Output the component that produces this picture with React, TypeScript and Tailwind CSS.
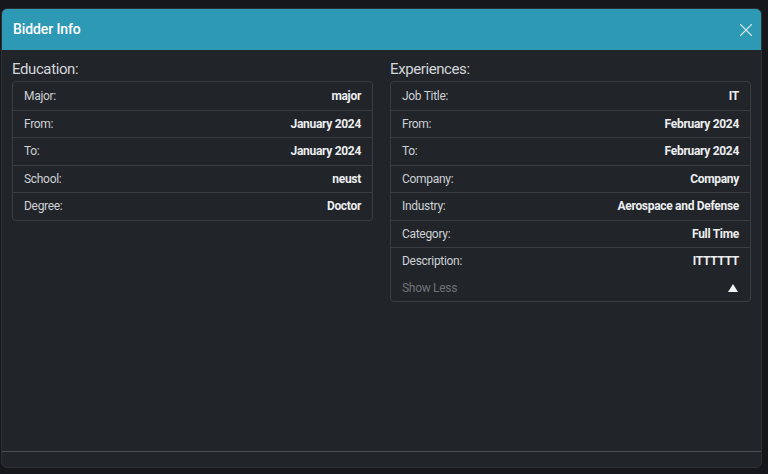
import { X } from "lucide-react";

const education = [
  ["Major:", "major"],
  ["From:", "January 2024"],
  ["To:", "January 2024"],
  ["School:", "neust"],
  ["Degree:", "Doctor"],
];

const experiences = [
  ["Job Title:", "IT"],
  ["From:", "February 2024"],
  ["To:", "February 2024"],
  ["Company:", "Company"],
  ["Industry:", "Aerospace and Defense"],
  ["Category:", "Full Time"],
];

function Row({ label, value, first }: { label: string; value: string; first?: boolean }) {
  return (
    <div
      className={
        "flex h-[27.5px] items-center justify-between px-[11px] text-[12px] tracking-[-0.3px] " +
        (first ? "" : "border-t border-[#3a3d42]")
      }
    >
      <span className="text-[#cdd1d5]">{label}</span>
      <span className="font-bold text-[#eceef0]">{value}</span>
    </div>
  );
}

export default function App() {
  return (
    <div
      className="h-[474px] w-[768px] overflow-hidden bg-[#15171a] pt-[8px] pl-[1px]"
      style={{ fontFamily: "Roboto, 'Noto Sans', sans-serif" }}
    >
      <div className="flex h-[460px] w-[761px] flex-col overflow-hidden rounded-[6px] border border-[#2c2f33] bg-[#212429]">
        {/* header */}
        <div className="flex h-[41px] shrink-0 items-center justify-between bg-[#2e99b5] pl-[11px] pr-[4px]">
          <span className="text-[14px] font-medium tracking-[-0.1px] text-white">Bidder Info</span>
          <X className="h-[22px] w-[22px] text-[#cfe9f1]" strokeWidth={1.2} />
        </div>

        {/* body */}
        <div className="grid flex-1 grid-cols-2 gap-[17px] px-[10px] pt-[9px]">
          <div>
            <div className="mb-[2px] text-[15px] leading-[20px] tracking-[-0.4px] text-[#d3d6d9]">Education:</div>
            <div className="rounded-[4px] border border-[#3a3d42]">
              {education.map(([l, v], i) => (
                <Row key={l} label={l} value={v} first={i === 0} />
              ))}
            </div>
          </div>
          <div>
            <div className="mb-[2px] text-[15px] leading-[20px] tracking-[-0.4px] text-[#d3d6d9]">Experiences:</div>
            <div className="rounded-[4px] border border-[#3a3d42]">
              {experiences.map(([l, v], i) => (
                <Row key={l} label={l} value={v} first={i === 0} />
              ))}
              <div className="border-t border-[#3a3d42] px-[11px] pt-[4.5px] pb-[4.5px] text-[12px] tracking-[-0.3px]">
                <div className="flex h-[17px] items-center justify-between">
                  <span className="text-[#cdd1d5]">Description:</span>
                  <span className="font-bold text-[#eceef0]">ITTTTTT</span>
                </div>
                <div className="mt-[10px] flex h-[17px] items-center justify-between">
                  <span className="text-[#6f7378]">Show Less</span>
                  <svg width="10" height="8" viewBox="0 0 10 8" className="mr-[1px]">
                    <path d="M5 0 L10 8 L0 8 Z" fill="#f1f2f3" />
                  </svg>
                </div>
              </div>
            </div>
          </div>
        </div>

        {/* footer */}
        <div className="h-[16px] shrink-0 border-t border-[#4a4d52]" />
      </div>
    </div>
  );
}
